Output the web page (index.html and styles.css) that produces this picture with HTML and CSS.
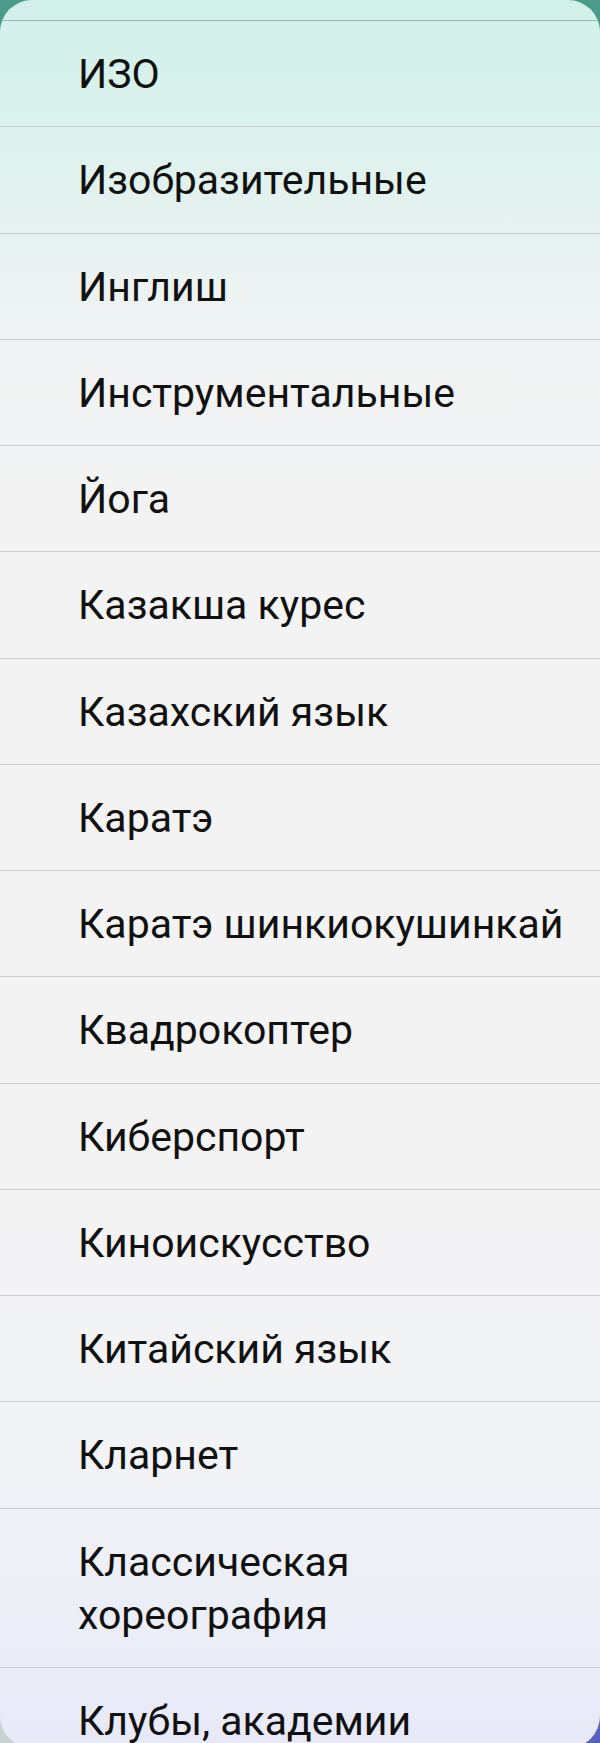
FILE: index.html
```html
<!DOCTYPE html>
<html lang="ru">
<head>
<meta charset="utf-8">
<title>Список</title>
<link rel="stylesheet" href="styles.css">
</head>
<body>
<div class="sheet">
  <ul class="list">
    <li class="item">ИЗО</li>
    <li class="item">Изобразительные</li>
    <li class="item">Инглиш</li>
    <li class="item">Инструментальные</li>
    <li class="item">Йога</li>
    <li class="item">Казакша курес</li>
    <li class="item">Казахский язык</li>
    <li class="item">Каратэ</li>
    <li class="item">Каратэ шинкиокушинкай</li>
    <li class="item">Квадрокоптер</li>
    <li class="item">Киберспорт</li>
    <li class="item">Киноискусство</li>
    <li class="item">Китайский язык</li>
    <li class="item">Кларнет</li>
    <li class="item">Классическая<br>хореография</li>
    <li class="item">Клубы, академии</li>
  </ul>
</div>
</body>
</html>
```

FILE: styles.css
```css
html, body {
  margin: 0;
  padding: 0;
}
body {
  width: 600px;
  height: 1743px;
  overflow: hidden;
  background:
    linear-gradient(90deg, #c7d2d2 0%, #9aa2d8 60%, #5560c8 100%) bottom / 100% 60px no-repeat,
    #4c9a89;
  font-family: Roboto, "Noto Sans", "Liberation Sans", sans-serif;
}
.sheet {
  height: 1748px;
  border-radius: 32px;
  overflow: hidden;
  background: linear-gradient(180deg,
    #d2f1ea 0px,
    #d9f1ec 110px,
    #e6f2f0 230px,
    #f0f3f3 330px,
    #f3f3f4 500px,
    #f3f3f4 1200px,
    #f2f3f6 1450px,
    #eceef7 1620px,
    #e7e9f8 1748px);
}
.list {
  list-style: none;
  margin: 0;
  padding: 20px 0 0;
}
.item {
  border-top: 1px solid #c9cbcd;
  padding: 27px 16px 25.14px 78px;
  font-size: 41px;
  line-height: 53.14px;
  color: #111;
}
.item:first-child {
  border-top-color: #93b9b0;
}
```
